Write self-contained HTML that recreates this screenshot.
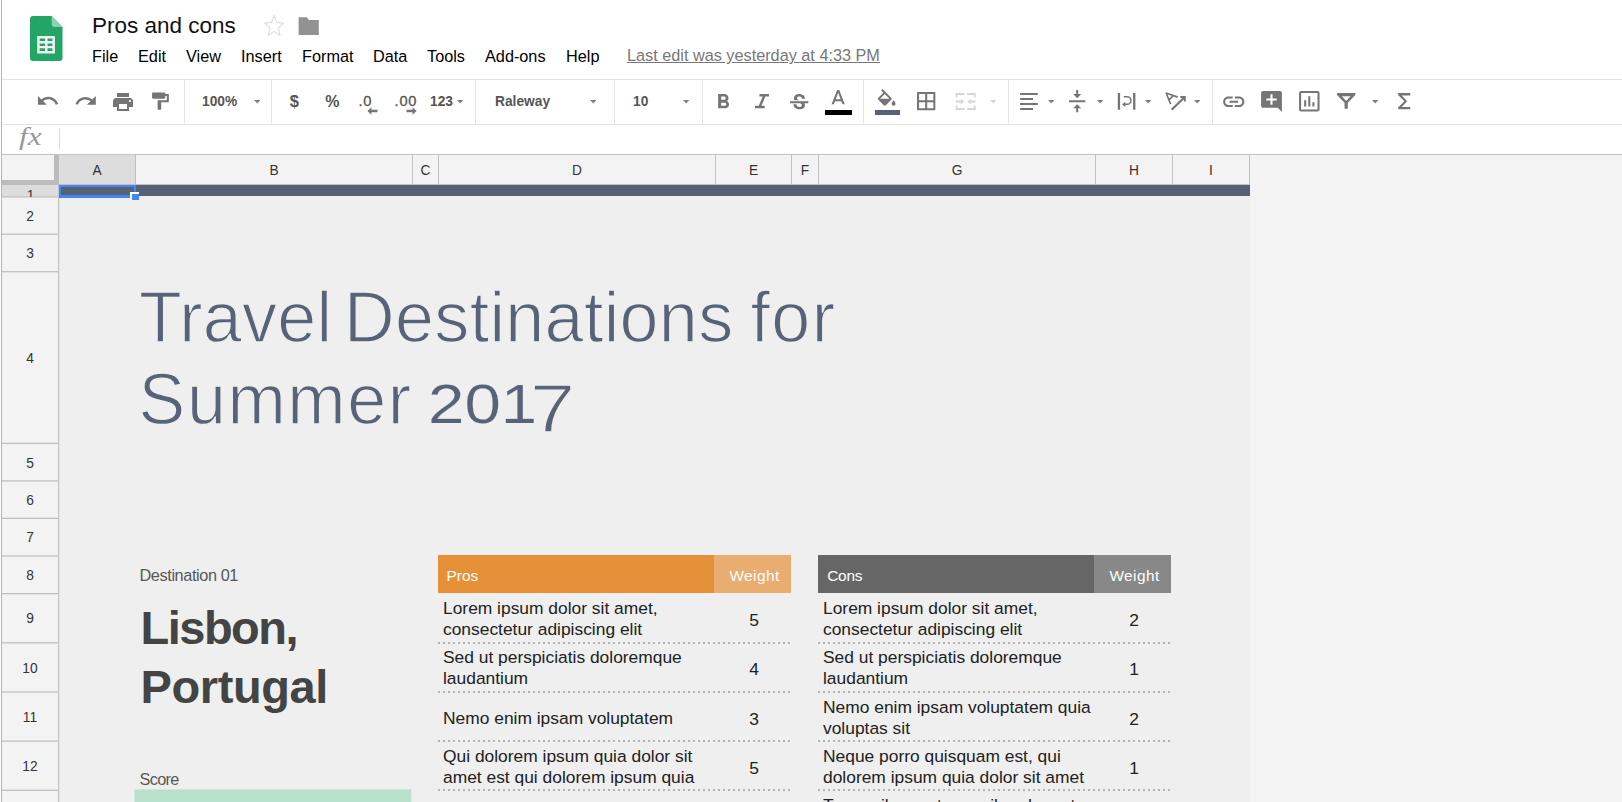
<!DOCTYPE html>
<html lang="en">
<head>
<meta charset="utf-8">
<title>Pros and cons</title>
<style>
html,body{margin:0;padding:0;}
body{width:1622px;height:802px;overflow:hidden;background:#fff;position:relative;font-family:"Liberation Sans",sans-serif;color:#000;}
.a{position:absolute;}
.t{position:absolute;white-space:nowrap;line-height:1;}
#edge{left:1px;top:0;width:1px;height:802px;background:#d9b25c;}
/* title + menu */
#doctitle{left:92px;top:15px;font-size:22.5px;color:#111;}
.menu{top:48.300px;font-size:16.25px;color:#000;}
#lastedit{left:627px;top:47.300px;font-size:16.25px;color:#777;text-decoration:underline;}
/* toolbar */
#tbtop{left:2px;top:79px;width:1620px;height:1px;background:#e3e3e3;}
#tbbot{left:2px;top:124px;width:1620px;height:1px;background:#e3e3e3;}
.sep{position:absolute;top:80px;width:1px;height:44px;background:#e6e6e6;}
.tbt{top:94px;font-size:13.75px;font-weight:bold;color:#555;}
.ico{position:absolute;fill:#757575;}
.car{position:absolute;width:0;height:0;border-left:4px solid transparent;border-right:4px solid transparent;border-top:4px solid #8a8a8a;top:100px;}
/* formula bar */
#fx{left:18.500px;top:124.400px;font-family:"Liberation Serif",serif;font-style:italic;font-size:25px;color:#999;transform:scaleX(1.250);transform-origin:0 0;}
#fxsep{left:59px;top:129px;width:1px;height:21px;background:#dcdcdc;}
#fbbot{left:2px;top:154px;width:1620px;height:1px;background:#c4c4c4;}
/* grid */
#gridbg{left:2px;top:155px;width:1620px;height:647px;background:#f3f3f3;}
#sheet{left:59px;top:185px;width:1191px;height:617px;background:#efefef;}
#corner{left:2px;top:155px;width:52px;height:25px;background:#f3f3f3;border-right:5px solid #bcbcbc;border-bottom:5px solid #bcbcbc;}
.ch{position:absolute;top:155px;height:29px;border-right:1px solid #c0c0c0;box-sizing:border-box;font-size:13.75px;color:#333;text-align:center;line-height:31px;background:#f3f3f3;}
.rh{position:absolute;left:2px;width:57px;border-right:1px solid #c0c0c0;border-bottom:1px solid #c4c4c4;box-sizing:border-box;font-size:13.75px;color:#333;text-align:center;background:#f3f3f3;overflow:hidden;}
.rl{position:absolute;left:2px;width:56px;height:20px;line-height:20px;font-size:13.75px;color:#333;text-align:center;}
#chbot{left:59px;top:184px;width:1191px;height:1px;background:#c0c0c0;}
#bar1{left:59px;top:185px;width:1191px;height:11px;background:#566275;}
#sel{left:59px;top:185px;width:77px;height:13px;box-sizing:border-box;border:2px solid #4285f4;border-bottom-width:3px;}
#selh{left:130px;top:192px;width:9px;height:8px;background:#4285f4;border-left:2px solid #fff;border-top:2px solid #fff;box-sizing:border-box;}
</style>
</head>
<body>
<div class="a" id="edge"></div>

<!-- logo -->
<svg class="a" style="left:30.300px;top:15px" width="33.500" height="47" viewBox="0 0 34 47" preserveAspectRatio="none">
<path d="M3 1h19l11 11v31a3 3 0 0 1-3 3H3a3 3 0 0 1-3-3V4a3 3 0 0 1 3-3z" fill="#23a566"/>
<path d="M22 1l11 11H25a3 3 0 0 1-3-3z" fill="#8ed1b1"/>
<path d="M7.300 21h18v17.400h-18zM9.800 23.500v2.600h5.500v-2.600zM17.800 23.500v2.600h5v-2.600zM9.800 28.400v2.600h5.500v-2.600zM17.800 28.400v2.600h5v-2.600zM9.800 33.300v2.600h5.500v-2.600zM17.800 33.300v2.600h5v-2.600z" fill="#f1f1f1" fill-rule="evenodd"/>
</svg>

<div class="t" id="doctitle">Pros and cons</div>
<svg class="a" style="left:260px;top:10px" width="30" height="30" viewBox="0 0 30 30"><path d="M14.15 5.50 L16.80 12.39 L23.57 13.02 L18.43 17.92 L19.97 25.20 L14.15 21.34 L8.33 25.20 L9.87 17.92 L4.73 13.02 L11.50 12.39Z" fill="none" stroke="#dcdcdc" stroke-width="1.100" stroke-linejoin="round"/></svg>
<svg class="a" style="left:295px;top:12px" width="28" height="28" viewBox="0 0 28 28"><path d="M3.600 5.300h8.300l1.900 2.600h10v15.100H3.600z" fill="#929292"/></svg>

<div class="t menu" style="left:92px">File</div>
<div class="t menu" style="left:138px">Edit</div>
<div class="t menu" style="left:186px">View</div>
<div class="t menu" style="left:241px">Insert</div>
<div class="t menu" style="left:302px">Format</div>
<div class="t menu" style="left:373px">Data</div>
<div class="t menu" style="left:427px">Tools</div>
<div class="t menu" style="left:485px">Add-ons</div>
<div class="t menu" style="left:566px">Help</div>
<div class="t" id="lastedit">Last edit was yesterday at 4:33 PM</div>

<!-- toolbar frame -->
<div class="a" id="tbtop"></div>
<div class="a" id="tbbot"></div>
<div class="sep" style="left:184px"></div>
<div class="sep" style="left:271px"></div>
<div class="sep" style="left:475px"></div>
<div class="sep" style="left:614px"></div>
<div class="sep" style="left:702px"></div>
<div class="sep" style="left:863px"></div>
<div class="sep" style="left:1008px"></div>
<div class="sep" style="left:1212px"></div>
<!--TB-START-->
<svg class="ico" style="left:35.51px;top:89.39px" width="23.60" height="23.60" viewBox="0 0 24 24"><path d="M12.500 8c-2.650 0-5.050.990-6.900 2.600L2 7v9h9l-3.620-3.620c1.390-1.160 3.160-1.880 5.120-1.880 3.540 0 6.550 2.310 7.600 5.500l2.370-.780C21.080 11.030 17.150 8 12.500 8z"/></svg>
<svg class="ico" style="left:73.53px;top:89.30px" width="23.80" height="23.80" viewBox="0 0 24 24"><path d="M18.400 10.600C16.550 8.990 14.150 8 11.500 8c-4.650 0-8.580 3.030-9.960 7.220L3.900 16c1.050-3.190 4.050-5.500 7.600-5.500 1.950 0 3.730.720 5.120 1.880L13 16h9V7l-3.600 3.600z"/></svg>
<svg class="ico" style="left:110.50px;top:89.50px" width="24.00" height="24.00" viewBox="0 0 24 24"><path d="M19 8H5c-1.660 0-3 1.340-3 3v6h4v4h12v-4h4v-6c0-1.660-1.340-3-3-3zm-3 11H8v-5h8v5zm3-7c-.550 0-1-.450-1-1s.450-1 1-1 1 .450 1 1-.450 1-1 1zm-1-9H6v4h12V3z"/></svg>
<svg class="ico" style="left:148.35px;top:90.02px" width="24.40" height="24.40" viewBox="0 0 24 24"><path d="M17 4V3.500c0-.550-.450-1-1-1H5c-.550 0-1 .450-1 1v4c0 .550.450 1 1 1h11c.550 0 1-.450 1-1V6h1.500v4H9.500v8.500c0 .550.450 1 1 1h1.500c.550 0 1-.450 1-1V12h7.500V4h-3.500z"/></svg>
<div class="t tbt" style="left:202.00px;top:95.00px;font-size:13.75px;">100%</div>
<svg class="a" style="left:253.80px;top:100.05px" width="6.40" height="3.50" viewBox="0 0 6.40 3.50"><path d="M0 0h6.40l-3.20 3.50z" fill="#808080"/></svg>
<div class="t tbt" style="left:289.80px;top:92.80px;font-size:16.50px;">$</div>
<div class="t tbt" style="left:325.20px;top:94.00px;font-size:16.00px;">%</div>
<div class="t tbt" style="left:358.60px;top:93.50px;font-size:14.60px;font-weight:normal;letter-spacing:0.700px;-webkit-text-stroke:0.300px #555;">.0</div>
<div class="t tbt" style="left:394.60px;top:93.50px;font-size:14.60px;font-weight:normal;letter-spacing:0.800px;-webkit-text-stroke:0.300px #555;">.00</div>
<svg class="ico" style="left:367px;top:107px" width="11" height="8" viewBox="0 0 11 8"><path d="M4.400 0.200L0.400 4 4.400 7.800V5.300h6.100V2.700H4.400z"/></svg>
<svg class="ico" style="left:406px;top:107px" width="11" height="8" viewBox="0 0 11 8"><path d="M6.600 0.200L10.600 4 6.600 7.800V5.300H0.500V2.700h6.100z"/></svg>
<div class="t tbt" style="left:430.00px;top:95.00px;font-size:13.75px;">123</div>
<svg class="a" style="left:457.30px;top:100.05px" width="6.40" height="3.50" viewBox="0 0 6.40 3.50"><path d="M0 0h6.40l-3.20 3.50z" fill="#808080"/></svg>
<div class="t tbt" style="left:495.00px;top:95.00px;font-size:13.75px;">Raleway</div>
<svg class="a" style="left:589.80px;top:100.05px" width="6.40" height="3.50" viewBox="0 0 6.40 3.50"><path d="M0 0h6.40l-3.20 3.50z" fill="#808080"/></svg>
<div class="t tbt" style="left:633.00px;top:95.00px;font-size:13.75px;">10</div>
<svg class="a" style="left:683.30px;top:100.05px" width="6.40" height="3.50" viewBox="0 0 6.40 3.50"><path d="M0 0h6.40l-3.20 3.50z" fill="#808080"/></svg>
<svg class="ico" style="left:711.12px;top:90.42px" width="24.40" height="24.40" viewBox="0 0 24 24"><path d="M15.600 10.790c.970-.670 1.650-1.770 1.650-2.790 0-2.260-1.750-4-4-4H7v14h7.040c2.090 0 3.710-1.700 3.710-3.790 0-1.520-.860-2.820-2.150-3.420zM10 6.500h3c.830 0 1.500.670 1.500 1.500s-.670 1.500-1.500 1.500h-3v-3zm3.500 9H10v-3h3.500c.830 0 1.500.670 1.500 1.500s-.670 1.500-1.500 1.500z"/></svg>
<svg class="ico" style="left:749.55px;top:90.42px" width="24.40" height="24.40" viewBox="0 0 24 24"><path d="M9.300 4v2.400h3.200l-3.900 9.200H5v2.400h9.400v-2.400h-3.200l3.900-9.200H18.700V4z"/></svg>
<svg class="ico" style="left:786.80px;top:90.82px" width="24.40" height="24.40" viewBox="0 0 24 24"><path d="M7.240 8.750c-.260-.480-.390-1.030-.390-1.670 0-.610.130-1.160.400-1.670.260-.500.630-.930 1.110-1.290.480-.350 1.050-.630 1.700-.830.660-.190 1.390-.290 2.180-.290.810 0 1.540.110 2.210.340.660.220 1.230.540 1.690.940.470.400.830.880 1.080 1.430.250.550.380 1.150.380 1.810h-3.010c0-.310-.050-.590-.150-.850-.090-.270-.240-.490-.440-.680-.200-.190-.450-.330-.750-.440-.300-.100-.660-.160-1.060-.160-.390 0-.740.040-1.030.130-.290.090-.530.210-.720.360-.190.160-.340.340-.440.550-.100.210-.150.430-.150.660 0 .480.250.880.740 1.210.380.250.770.480 1.410.700H7.390c-.050-.080-.110-.170-.150-.250zM21 12v-2H3v2h9.620c.180.070.400.140.550.200.370.170.660.340.870.510.210.170.350.360.430.570.070.200.110.430.110.690 0 .230-.050.450-.140.660-.090.200-.230.380-.420.530-.190.150-.420.260-.710.350-.290.080-.630.130-1.010.130-.430 0-.830-.040-1.180-.130s-.660-.230-.910-.420c-.250-.190-.450-.440-.590-.750-.140-.310-.250-.760-.250-1.210H6.400c0 .550.080 1.130.240 1.580.160.450.370.850.650 1.210.280.350.600.660.980.920.370.260.780.480 1.220.650.440.170.900.300 1.380.390.480.080.960.130 1.440.130.800 0 1.530-.090 2.180-.280s1.210-.450 1.670-.790c.460-.340.820-.770 1.070-1.270s.380-1.070.380-1.710c0-.600-.100-1.140-.310-1.610-.050-.110-.110-.230-.170-.330H21z"/></svg>
<svg class="ico" style="left:826.10px;top:87.33px" width="24.40" height="24.40" viewBox="0 0 24 24"><path d="M11 3L5.500 17h2.250l1.120-3h6.250l1.120 3h2.250L13 3h-2zm-1.380 9L12 5.670 14.380 12H9.620z"/></svg>
<div class="a" style="left:825px;top:110px;width:27px;height:5px;background:#000"></div>
<svg class="ico" style="left:874.95px;top:88.68px" width="23.50" height="23.50" viewBox="0 0 24 24"><path d="M16.560 8.940L7.620 0 6.210 1.410l2.380 2.380-5.150 5.150c-.590.590-.590 1.540 0 2.120l5.500 5.500c.290.290.680.440 1.060.440s.770-.150 1.060-.440l5.500-5.500c.590-.580.590-1.530 0-2.120zM5.210 10L10 5.210 14.790 10H5.210zM19 11.500s-2 2.170-2 3.500c0 1.100.900 2 2 2s2-.900 2-2c0-1.330-2-3.500-2-3.500z"/></svg>
<div class="a" style="left:874.5px;top:110px;width:25.5px;height:5px;background:#566275"></div>
<svg class="ico" style="left:914.40px;top:89.00px" width="24.40" height="24.40" viewBox="0 0 24 24"><path d="M3 3v18h18V3H3zm8 16H5v-6h6v6zm0-8H5V5h6v6zm8 8h-6v-6h6v6zm0-8h-6V5h6v6z"/></svg>
<svg class="ico" style="left:955px;top:92px;fill:#d6d6d6" width="22" height="20" viewBox="0 0 22 20"><path d="M0.700 1.100h8.700v1.900H2.600v2.500H0.700zM12.200 1.100h8.500v4.400h-1.900V3h-6.600zM0.700 13.600h1.900v2.500h6.800v1.900H0.700zM18.800 13.600h1.900v4.400h-8.500v-1.900h6.600zM0.900 8.600h4.900V6.900l3.600 2.700-3.600 2.700v-1.700H0.900zM20.500 8.600h-4.700V6.900l-3.600 2.700 3.600 2.700v-1.700h4.700z"/></svg>
<svg class="a" style="left:989.80px;top:100.05px" width="6.40" height="3.50" viewBox="0 0 6.40 3.50"><path d="M0 0h6.40l-3.20 3.50z" fill="#d6d6d6"/></svg>
<svg class="ico" style="left:1019px;top:92px" width="20" height="19" viewBox="0 0 20 19"><path d="M1.100 1.100h17.700v1.900H1.100zM1.100 6.100h12.900v1.900H1.100zM1.100 11.100h17.700v1.900H1.100zM1.100 16h12.900v1.900H1.100z"/></svg>
<svg class="a" style="left:1047.50px;top:100.05px" width="6.40" height="3.50" viewBox="0 0 6.40 3.50"><path d="M0 0h6.40l-3.20 3.50z" fill="#808080"/></svg>
<svg class="ico" style="left:1065.30px;top:89.30px" width="24.40" height="24.40" viewBox="0 0 24 24"><path d="M8 19h3v4h2v-4h3l-4-4-4 4zm8-14h-3V1h-2v4H8l4 4 4-4zM4 11v2h16v-2H4z"/></svg>
<svg class="a" style="left:1096.60px;top:100.05px" width="6.40" height="3.50" viewBox="0 0 6.40 3.50"><path d="M0 0h6.40l-3.20 3.50z" fill="#808080"/></svg>
<svg class="ico" style="left:1116px;top:91px" width="21" height="20" viewBox="0 0 21 20"><path d="M1.800 1.900h2.300v16.800H1.800zM17.100 1.900h2.300v16.800h-2.300zM7.800 4.900H11.100a4.600 4.600 0 0 1 0 9.200H9.300v2L6 13.400l3.300-2.700v1.900h1.800a3.100 3.100 0 0 0 0-6.200H7.800z"/></svg>
<svg class="a" style="left:1144.80px;top:100.05px" width="6.40" height="3.50" viewBox="0 0 6.40 3.50"><path d="M0 0h6.40l-3.20 3.50z" fill="#808080"/></svg>
<svg class="ico" style="left:1164px;top:90px" width="24" height="22" viewBox="0 0 24 22"><path d="M6.600 14L2.100 3 13.700 7.100M4.900 9.900L9.300 5.600" fill="none" stroke="#757575" stroke-width="1.700" stroke-linejoin="bevel"/><path d="M7.600 19.700L20.300 7.500" fill="none" stroke="#757575" stroke-width="2.200"/><path d="M16.300 7h4.500v4.500" fill="none" stroke="#757575" stroke-width="1.900"/></svg>
<svg class="a" style="left:1194.10px;top:100.05px" width="6.40" height="3.50" viewBox="0 0 6.40 3.50"><path d="M0 0h6.40l-3.20 3.50z" fill="#808080"/></svg>
<svg class="ico" style="left:1221.25px;top:88.65px" width="25.50" height="25.50" viewBox="0 0 24 24"><path d="M3.900 12c0-1.710 1.390-3.100 3.100-3.100h4V7H7c-2.760 0-5 2.240-5 5s2.240 5 5 5h4v-1.900H7c-1.710 0-3.100-1.390-3.100-3.100zM8 13h8v-2H8v2zm9-6h-4v1.900h4c1.710 0 3.100 1.390 3.100 3.100s-1.390 3.100-3.100 3.100h-4V17h4c2.760 0 5-2.240 5-5s-2.240-5-5-5z"/></svg>
<svg class="ico" style="left:1259.30px;top:89.30px" width="25.00" height="25.00" viewBox="0 0 24 24"><path d="M21.990 4c0-1.100-.890-2-1.990-2H4c-1.100 0-2 .900-2 2v12c0 1.100.900 2 2 2h14l4 4-.010-18zM17 11h-4v4h-2v-4H7V9h4V5h2v4h4v2z"/></svg>
<svg class="ico" style="left:1296.80px;top:89.10px" width="24.60" height="24.60" viewBox="0 0 24 24"><path d="M9 17H7v-6h2v6zm4 0h-2V7h2v10zm4 0h-2v-4h2v4zM4 2h16a2 2 0 0 1 2 2v16a2 2 0 0 1-2 2H4a2 2 0 0 1-2-2V4a2 2 0 0 1 2-2zm0 2v16h16V4z"/></svg>
<svg class="ico" style="left:1334.20px;top:89.25px" width="24.40" height="24.40" viewBox="0 0 24 24"><path d="M3 4h18v1.800L13.600 13.500V19.500h-3.200V13.500L3 5.800zM7.800 7.200l3.700 4.200h1L16.200 7.200z" fill-rule="evenodd"/></svg>
<svg class="a" style="left:1371.50px;top:100.05px" width="6.40" height="3.50" viewBox="0 0 6.40 3.50"><path d="M0 0h6.40l-3.20 3.50z" fill="#808080"/></svg>
<svg class="ico" style="left:1391.70px;top:89.40px" width="24.40" height="24.40" viewBox="0 0 24 24"><path d="M18 4H6v1.900l6.200 6.100L6 18.100V20h12v-2.300H9.600l5.300-5.700-5.300-5.700H18z"/></svg>
<!--TB-END-->

<!-- formula bar -->
<div class="t" id="fx">fx</div>
<div class="a" id="fxsep"></div>
<div class="a" id="fbbot"></div>

<!-- grid -->
<div class="a" id="gridbg"></div>
<div class="a" id="sheet"></div>
<div class="a" id="corner"></div>
<div class="ch" style="left:59px;width:77px;background:#dddddd">A</div>
<div class="ch" style="left:136px;width:277px">B</div>
<div class="ch" style="left:413px;width:26px">C</div>
<div class="ch" style="left:439px;width:277px">D</div>
<div class="ch" style="left:716px;width:76px">E</div>
<div class="ch" style="left:792px;width:27px">F</div>
<div class="ch" style="left:819px;width:277px">G</div>
<div class="ch" style="left:1096px;width:77px">H</div>
<div class="ch" style="left:1173px;width:77px">I</div>
<div class="a" id="chbot"></div>

<!--ROWS-START-->
<div class="a" style="left:2px;top:185px;width:56px;height:617px;background:#f3f3f3"></div>
<div class="a" style="left:2px;top:185px;width:56px;height:12px;background:#dddddd"></div>
<div class="a" style="left:58px;top:185px;width:1px;height:617px;background:#c2c2c2"></div>
<div class="a" style="left:59px;top:185px;width:1px;height:617px;background:rgba(190,190,190,0.18)"></div>
<div class="a" style="left:2px;top:196px;width:56px;height:1px;background:rgba(190,190,190,0.725)"></div>
<div class="a" style="left:2px;top:197px;width:56px;height:1px;background:rgba(190,190,190,0.525)"></div>
<div class="a" style="left:2px;top:233px;width:56px;height:1px;background:rgba(190,190,190,0.425)"></div>
<div class="a" style="left:2px;top:234px;width:56px;height:1px;background:rgba(190,190,190,0.825)"></div>
<div class="a" style="left:2px;top:271px;width:56px;height:1px;background:rgba(190,190,190,0.925)"></div>
<div class="a" style="left:2px;top:272px;width:56px;height:1px;background:rgba(190,190,190,0.325)"></div>
<div class="a" style="left:2px;top:442px;width:56px;height:1px;background:rgba(190,190,190,0.225)"></div>
<div class="a" style="left:2px;top:443px;width:56px;height:1px;background:rgba(190,190,190,1.000)"></div>
<div class="a" style="left:2px;top:480px;width:56px;height:1px;background:rgba(190,190,190,0.725)"></div>
<div class="a" style="left:2px;top:481px;width:56px;height:1px;background:rgba(190,190,190,0.525)"></div>
<div class="a" style="left:2px;top:517px;width:56px;height:1px;background:rgba(190,190,190,0.225)"></div>
<div class="a" style="left:2px;top:518px;width:56px;height:1px;background:rgba(190,190,190,1.000)"></div>
<div class="a" style="left:2px;top:555px;width:56px;height:1px;background:rgba(190,190,190,0.625)"></div>
<div class="a" style="left:2px;top:556px;width:56px;height:1px;background:rgba(190,190,190,0.625)"></div>
<div class="a" style="left:2px;top:593px;width:56px;height:1px;background:rgba(190,190,190,1.000)"></div>
<div class="a" style="left:2px;top:594px;width:56px;height:1px;background:rgba(190,190,190,0.225)"></div>
<div class="a" style="left:2px;top:642px;width:56px;height:1px;background:rgba(190,190,190,0.825)"></div>
<div class="a" style="left:2px;top:643px;width:56px;height:1px;background:rgba(190,190,190,0.425)"></div>
<div class="a" style="left:2px;top:691px;width:56px;height:1px;background:rgba(190,190,190,0.625)"></div>
<div class="a" style="left:2px;top:692px;width:56px;height:1px;background:rgba(190,190,190,0.625)"></div>
<div class="a" style="left:2px;top:740px;width:56px;height:1px;background:rgba(190,190,190,0.525)"></div>
<div class="a" style="left:2px;top:741px;width:56px;height:1px;background:rgba(190,190,190,0.725)"></div>
<div class="a" style="left:2px;top:789px;width:56px;height:1px;background:rgba(190,190,190,0.325)"></div>
<div class="a" style="left:2px;top:790px;width:56px;height:1px;background:rgba(190,190,190,0.925)"></div>
<div class="rl" style="top:190px;left:2.5px;height:12px;line-height:12px;clip-path:inset(0 0 5px 0)">1</div>
<div class="rl" style="top:206.65px">2</div>
<div class="rl" style="top:244.05px">3</div>
<div class="rl" style="top:348.65px">4</div>
<div class="rl" style="top:453.85px">5</div>
<div class="rl" style="top:490.75px">6</div>
<div class="rl" style="top:528.30px">7</div>
<div class="rl" style="top:565.90px">8</div>
<div class="rl" style="top:609.30px">9</div>
<div class="rl" style="top:658.50px">10</div>
<div class="rl" style="top:707.65px">11</div>
<div class="rl" style="top:756.80px">12</div>
<div class="rl" style="top:806.00px">13</div>
<!--ROWS-END-->
<div class="a" id="bar1"></div>
<div class="a" id="sel"></div>
<div class="a" id="selh"></div>
<!--C-START-->
<style>
.ttl{font-size:70px;color:#566378;-webkit-text-stroke:1.300px #efefef;}
.lbl{font-size:16.300px;color:#585858;}
.big{font-size:47px;font-weight:bold;color:#444;left:140px;}
.hd{position:absolute;top:555px;height:38px;}
.hdt{font-size:15.400px;color:#fff;top:567.600px;}
.bt{font-size:17.400px;color:#222;}
.num{font-size:17.400px;color:#222;width:20px;text-align:center;}
.dot{position:absolute;height:2px;background:repeating-linear-gradient(90deg,#b4b4b4 0,#b4b4b4 2.500px,transparent 2.500px,transparent 5px);}
</style>
<div class="t ttl" style="left:138.900px;top:283.400px;letter-spacing:0.250px;transform:scaleY(1.040);transform-origin:0 59.250px">Travel</div>
<div class="t ttl" style="left:344.100px;top:283.400px;letter-spacing:0.350px;transform:scaleY(1.040);transform-origin:0 59.250px">Destinations</div>
<div class="t ttl" style="left:750.400px;top:283.400px;letter-spacing:1.500px;transform:scaleY(1.040);transform-origin:0 59.250px">for</div>
<div class="t ttl" style="left:138.600px;top:365.400px;letter-spacing:1.600px;transform:scaleY(1.040);transform-origin:0 59.250px">Summer</div>
<div class="t ttl" style="left:427.900px;top:376.200px;font-size:56px;-webkit-text-stroke:0.200px #efefef;transform:scaleX(1.168);transform-origin:0 0">201</div>
<div class="t ttl" style="left:529.900px;top:373.500px;font-size:69px;transform:scaleX(1.175);transform-origin:0 0">7</div>

<div class="t lbl" style="left:139.500px;top:567.300px;letter-spacing:-0.400px">Destination 01</div>
<div class="t big" style="top:604.300px;letter-spacing:-1.500px;left:140.500px">Lisbon,</div>
<div class="t big" style="top:663.200px;letter-spacing:-0.400px;left:140.500px">Portugal</div>
<div class="t lbl" style="left:139.500px;top:770.900px;letter-spacing:-0.680px">Score</div>
<svg class="a" style="left:130px;top:785px" width="290" height="17" viewBox="0 0 290 17"><rect x="4.500" y="4.400" width="276.700" height="13" fill="#b7e1cd"/></svg>

<!-- Pros -->
<div class="hd" style="left:438px;width:276px;background:#e69138"></div>
<div class="hd" style="left:714px;width:77px;background:#eaad70"></div>
<div class="t hdt" style="left:446.500px">Pros</div>
<div class="t hdt" style="left:729.400px;letter-spacing:0.450px">Weight</div>
<div class="t bt" style="left:443px;top:600.00px">Lorem ipsum dolor sit amet,</div>
<div class="t bt" style="left:443px;top:621.00px">consectetur adipiscing elit</div>
<div class="t bt" style="left:443px;top:649.00px">Sed ut perspiciatis doloremque</div>
<div class="t bt" style="left:443px;top:670.00px">laudantium</div>
<div class="t bt" style="left:443px;top:710.00px">Nemo enim ipsam voluptatem</div>
<div class="t bt" style="left:443px;top:747.50px">Qui dolorem ipsum quia dolor sit</div>
<div class="t bt" style="left:443px;top:769.00px">amet est qui dolorem ipsum quia</div>
<div class="t num" style="left:744px;top:612.30px">5</div>
<div class="t num" style="left:744px;top:661.30px">4</div>
<div class="t num" style="left:744px;top:710.80px">3</div>
<div class="t num" style="left:744px;top:759.80px">5</div>
<div class="dot" style="left:438px;width:353px;top:642px"></div>
<div class="dot" style="left:438px;width:353px;top:691px"></div>
<div class="dot" style="left:438px;width:353px;top:740px"></div>
<div class="dot" style="left:438px;width:353px;top:789px"></div>

<!-- Cons -->
<div class="hd" style="left:818px;width:276px;background:#666666"></div>
<div class="hd" style="left:1094px;width:77px;background:#888888"></div>
<div class="t hdt" style="left:827.200px;letter-spacing:-0.200px">Cons</div>
<div class="t hdt" style="left:1109.400px;letter-spacing:0.450px">Weight</div>
<div class="t bt" style="left:823px;top:600.00px">Lorem ipsum dolor sit amet,</div>
<div class="t bt" style="left:823px;top:621.00px">consectetur adipiscing elit</div>
<div class="t bt" style="left:823px;top:649.00px">Sed ut perspiciatis doloremque</div>
<div class="t bt" style="left:823px;top:670.00px">laudantium</div>
<div class="t bt" style="left:823px;top:698.50px">Nemo enim ipsam voluptatem quia</div>
<div class="t bt" style="left:823px;top:720.00px">voluptas sit</div>
<div class="t bt" style="left:823px;top:747.50px">Neque porro quisquam est, qui</div>
<div class="t bt" style="left:823px;top:769.00px">dolorem ipsum quia dolor sit amet</div>
<div class="t bt" style="left:823px;top:796.50px">Temporibus autem quibusdam et</div>
<div class="t num" style="left:1124px;top:612.30px">2</div>
<div class="t num" style="left:1124px;top:661.30px">1</div>
<div class="t num" style="left:1124px;top:710.80px">2</div>
<div class="t num" style="left:1124px;top:759.80px">1</div>
<div class="dot" style="left:818px;width:353px;top:642px"></div>
<div class="dot" style="left:818px;width:353px;top:691px"></div>
<div class="dot" style="left:818px;width:353px;top:740px"></div>
<div class="dot" style="left:818px;width:353px;top:789px"></div>
<!--C-END-->
</body>
</html>
